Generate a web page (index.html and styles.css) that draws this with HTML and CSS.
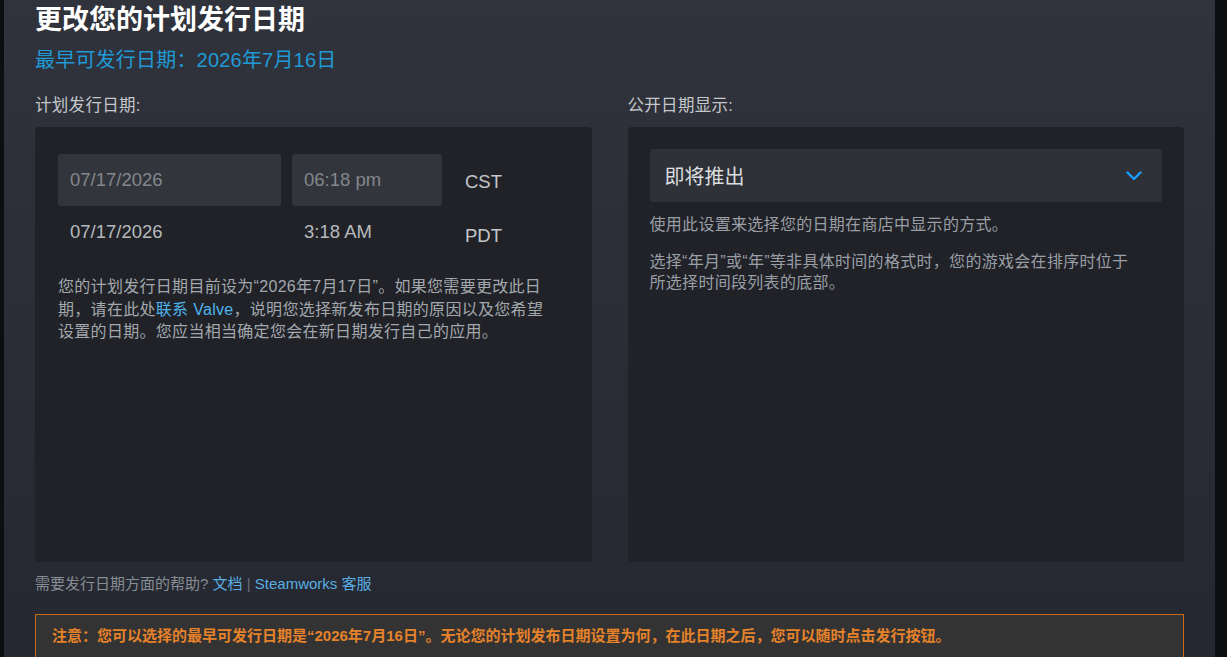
FILE: index.html
```html
<!DOCTYPE html>
<html lang="zh-CN">

<head>
    <meta charset="UTF-8">
    <meta name="viewport" content="width=device-width, initial-scale=1.0">
    <title>更改您的计划发行日期</title>
    <link rel="stylesheet" href="styles.css">
</head>

<body>
    <div class="backdrop">
        <div class="modal">
            <h1 class="title">更改您的计划发行日期</h1>
            <div class="earliest">最早可发行日期：2026年7月16日</div>

            <div class="columns">
                <div class="column">
                    <div class="field-label">计划发行日期:</div>
                    <div class="panel panel-schedule">
                        <div class="date-grid">
                            <input class="input-box" type="text" value="07/17/2026" disabled>
                            <input class="input-box" type="text" value="06:18 pm" disabled>
                            <span class="tz tz-local">CST</span>
                            <span class="converted">07/17/2026</span>
                            <span class="converted">3:18 AM</span>
                            <span class="tz tz-pacific">PDT</span>
                        </div>
                        <p class="note">您的计划发行日期目前设为“2026年7月17日”。如果您需要更改此日期，请在此处<a href="#">联系 Valve</a>，说明您选择新发布日期的原因以及您希望设置的日期。您应当相当确定您会在新日期发行自己的应用。</p>
                    </div>
                </div>

                <div class="column">
                    <div class="field-label">公开日期显示:</div>
                    <div class="panel panel-display">
                        <div class="dropdown">
                            <span>即将推出</span>
                            <svg class="chevron" width="16" height="10" viewBox="0 0 16 10">
                                <polyline points="1.5,1.5 8,8 14.5,1.5" fill="none" stroke="#1a9fff" stroke-width="2.4" stroke-linecap="round" stroke-linejoin="round"/>
                            </svg>
                        </div>
                        <p class="hint">使用此设置来选择您的日期在商店中显示的方式。</p>
                        <p class="hint">选择“年月”或“年”等非具体时间的格式时，您的游戏会在排序时位于所选择时间段列表的底部。</p>
                    </div>
                </div>
            </div>

            <div class="help">需要发行日期方面的帮助? <a href="#">文档</a> <span class="sep">|</span> <a href="#">Steamworks 客服</a></div>

            <div class="warning">注意：您可以选择的最早可发行日期是“2026年7月16日”。无论您的计划发布日期设置为何，在此日期之后，您可以随时点击发行按钮。</div>
        </div>
    </div>
</body>

</html>
```

FILE: styles.css
```css
body {
    margin: 0;
    height: 657px;
    overflow: hidden;
    background-color: #0d0e10;
    font-family: "Liberation Sans", "Noto Sans CJK SC", sans-serif;
}

.backdrop {
    padding-left: 4px;
}

.modal {
    width: 1149px;
    height: 653px;
    padding: 4px 31px 0;
    overflow: hidden;
    background: linear-gradient(to bottom, #30333b, #252830);
}

.title {
    margin: 0;
    font-size: 27px;
    line-height: 32px;
    font-weight: bold;
    color: #ffffff;
}

.earliest {
    margin-top: 11px;
    font-size: 20px;
    line-height: 26px;
    letter-spacing: 0.2px;
    color: #1f9ad6;
}

.columns {
    display: grid;
    grid-template-columns: 1fr 1fr;
    gap: 36px;
    margin-top: 21px;
}

.field-label {
    font-size: 16.5px;
    line-height: 22px;
    letter-spacing: 0.3px;
    color: #c4c8cc;
}

.panel {
    height: 435px;
    margin-top: 11px;
    box-sizing: border-box;
    background-color: #202228;
    border-radius: 4px;
}

.panel-schedule {
    padding: 27px 23px;
}

.date-grid {
    display: grid;
    grid-template-columns: 223px 150px auto;
    grid-template-rows: 52px 40px;
    column-gap: 11px;
    row-gap: 6px;
}

.input-box {
    box-sizing: border-box;
    width: 100%;
    height: 52px;
    padding: 0 12px;
    border: none;
    border-radius: 3px;
    background-color: #32353c;
    font-family: inherit;
    font-size: 18.5px;
    color: #83878c;
}

.converted {
    align-self: center;
    padding-left: 12px;
    font-size: 18.5px;
    color: #b6babe;
}

.tz {
    align-self: center;
    margin-left: 12px;
    font-size: 18.5px;
    color: #c3c6ca;
}

.tz-local {
    padding-top: 4px;
}

.tz-pacific {
    padding-top: 8px;
}

.note {
    max-width: 490px;
    margin: 24px 0 0;
    font-size: 16px;
    line-height: 22.5px;
    letter-spacing: 0.3px;
    color: #a3a8ad;
}

.note a {
    color: #4fb4ee;
    text-decoration: none;
}

.panel-display {
    padding: 22px;
}

.dropdown {
    display: flex;
    justify-content: space-between;
    align-items: center;
    height: 53px;
    padding: 0 20px 0 15px;
    border-radius: 3px;
    background-color: #2e3138;
    font-size: 20px;
    color: #dcdedf;
}

.hint {
    max-width: 490px;
    margin: 12px 0 0;
    font-size: 16px;
    line-height: 21.5px;
    letter-spacing: 0.3px;
    color: #9a9fa5;
}

.hint + .hint {
    margin-top: 15px;
}

.help {
    margin-top: 12px;
    font-size: 15px;
    line-height: 20px;
    color: #878d94;
}

.help a {
    color: #5aaee3;
    text-decoration: none;
}

.sep {
    color: #6b7077;
}

.warning {
    margin-top: 20px;
    padding: 11px 16px;
    border: 1px solid #c8691c;
    background-color: #333333;
    font-size: 15px;
    line-height: 20px;
    font-weight: bold;
    color: #e5822a;
}
```
